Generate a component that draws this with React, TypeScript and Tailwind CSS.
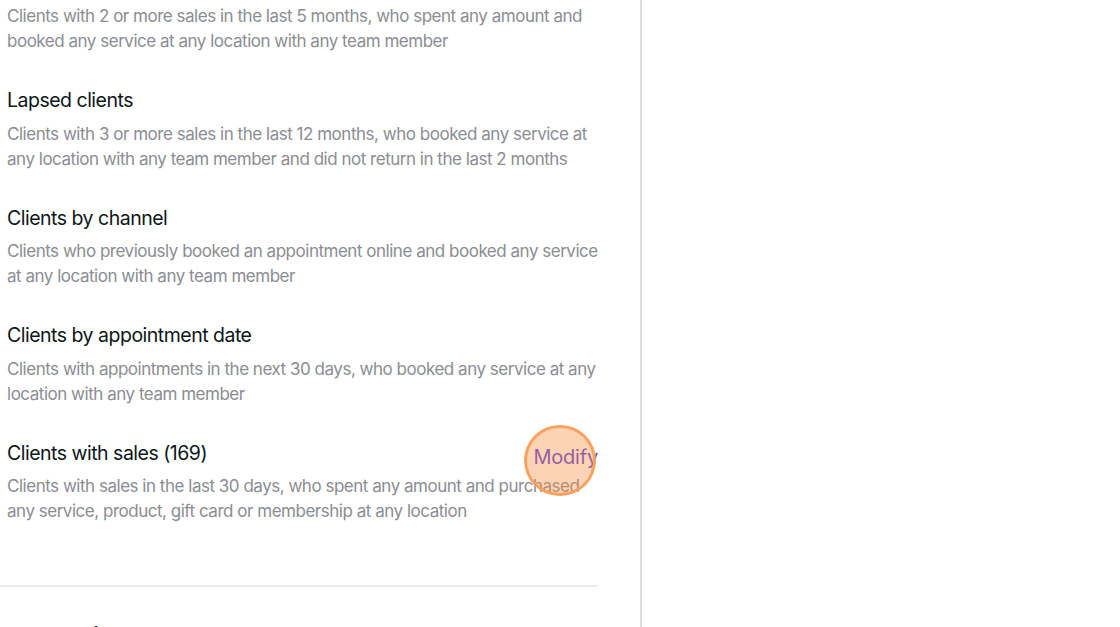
import React from "react";

const items = [
  {
    title: "Lapsed clients",
    desc: "Clients with 3 or more sales in the last 12 months, who booked any service at any location with any team member and did not return in the last 2 months",
  },
  {
    title: "Clients by channel",
    desc: "Clients who previously booked an appointment online and booked any service at any location with any team member",
  },
  {
    title: "Clients by appointment date",
    desc: "Clients with appointments in the next 30 days, who booked any service at any location with any team member",
  },
];

const descCls = "text-[17px] leading-[25px] text-[#8a8d93] tracking-[-0.48px]";
const headCls = "text-[19.5px] leading-[28px] text-[#0d1619] font-normal tracking-[-0.5px]";

export default function App() {
  return (
    <div
      className="w-[1120px] h-[627px] overflow-hidden bg-white flex"
      style={{ fontFamily: "Inter, 'Noto Sans', sans-serif" }}
    >
      <div className="w-[642px] shrink-0 border-r-2 border-[#dedede] h-full">
        <div className="w-[598px] flex flex-col">
          <p className={`pl-[7px] pt-[4px] ${descCls}`}>
            Clients with 2 or more sales in the last 5 months, who spent any amount and booked any service at any location with any team member
          </p>
          {items.map((it) => (
            <div key={it.title} className="pl-[7px] pt-[32px] flex flex-col">
              <h3 className={headCls}>{it.title}</h3>
              <p className={`mt-[7.5px] ${descCls}`}>{it.desc}</p>
            </div>
          ))}
          <div className="pl-[7px] pt-[32px] flex flex-col">
            <div className="flex items-start justify-between h-[28px]">
              <h3 className={headCls}>Clients with sales (169)</h3>
              <div className="relative mt-[4px]">
                <button className="text-[20px] leading-[28px] text-[#5b45e0] tracking-[-0.2px]">Modify</button>
                <span className="absolute left-[-9px] top-[-18px] w-[72px] h-[71px] rounded-full bg-[rgba(251,140,60,0.38)] border-[3px] border-[rgba(248,160,90,0.95)]" />
              </div>
            </div>
            <p className={`mt-[7.5px] ${descCls}`}>
              Clients with sales in the last 30 days, who spent any amount and purchased any service, product, gift card or membership at any location
            </p>
          </div>
          <div className="mt-[61px] border-t-2 border-[#ebebeb]" />
          <h2 className="pl-[7px] mt-[34px] text-[22px] leading-[28px] font-bold text-[#0d1619]">Bulk actions</h2>
        </div>
      </div>
      <div className="flex-1" />
    </div>
  );
}
